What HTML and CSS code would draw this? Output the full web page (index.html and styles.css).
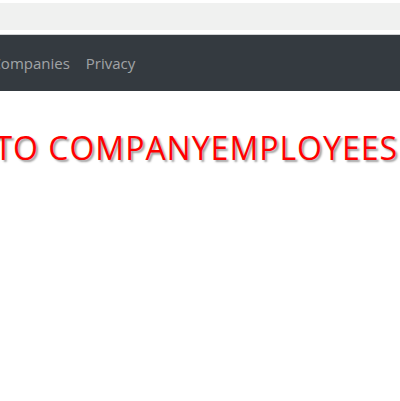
FILE: index.html
```html
<!DOCTYPE html>
<html>
<head>
<meta charset="utf-8">
<link rel="stylesheet" href="styles.css">
</head>
<body>
<div class="topbar"><div class="topbar-fill"></div></div>
<nav class="navbar">
  <ul class="nav-list">
    <li><a href="#">Home</a></li>
    <li><a href="#">Companies</a></li>
    <li><a href="#">Privacy</a></li>
  </ul>
</nav>
<main class="main">
  <h1 class="welcome">WELCOME TO COMPANYEMPLOYEES</h1>
</main>
</body>
</html>
```
FILE: styles.css
```css
html, body {
  margin: 0;
  padding: 0;
  background: #ffffff;
  overflow: hidden;
}
body {
  font-family: "Open Sans", "Noto Sans", sans-serif;
}
.topbar {
  padding: 3px 0 4px;
  border-bottom: 1px solid #d0d2d4;
}
.topbar-fill {
  height: 27px;
  background: #f0f1f0;
}
.navbar {
  background: #343a40;
  height: 56px;
  display: flex;
  align-items: center;
  overflow: hidden;
}
.nav-list {
  list-style: none;
  margin: 0 0 0 -75px;
  padding: 0;
  display: flex;
  white-space: nowrap;
}
.nav-list a {
  display: block;
  padding: 0 8px;
  color: rgba(255,255,255,0.55);
  text-decoration: none;
  font-size: 15px;
}
.main {
  padding-top: 35px;
  display: flex;
  justify-content: flex-end;
  overflow: hidden;
}
.welcome {
  margin: 0 2px 0 0;
  flex-shrink: 0;
  white-space: nowrap;
  font-size: 32px;
  letter-spacing: 1px;
  font-weight: 400;
  color: #ff0000;
  text-shadow: 2px 2px 2px #a0a0a0;
}
```
